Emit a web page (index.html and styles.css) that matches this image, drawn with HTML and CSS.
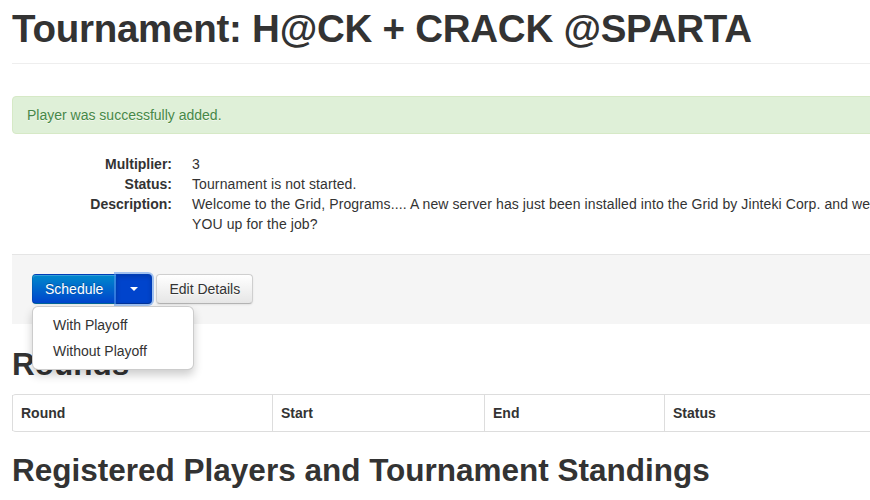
FILE: index.html
```html
<!DOCTYPE html>
<html>
<head>
<meta charset="utf-8">
<title>Tournament</title>
<link rel="stylesheet" href="styles.css">
</head>
<body>
<div class="page">
  <div class="page-header">
    <h1>Tournament: H@CK + CRACK @SPARTA</h1>
  </div>

  <div class="alert">Player was successfully added.</div>

  <dl class="details">
    <dt>Multiplier:</dt>
    <dd>3</dd>
    <dt>Status:</dt>
    <dd>Tournament is not started.</dd>
    <dt>Description:</dt>
    <dd>Welcome to the Grid, Programs.... A new server has just been installed into the Grid by Jinteki Corp. and we need it. Are<br>YOU up for the job?</dd>
  </dl>

  <div class="form-actions">
    <div class="btn-group open">
      <button class="btn btn-primary btn-first">Schedule</button><button class="btn btn-primary dropdown-toggle"><span class="caret"></span></button>
      <ul class="dropdown-menu">
        <li><a href="#">With Playoff</a></li>
        <li><a href="#">Without Playoff</a></li>
      </ul>
    </div>
    <button class="btn btn-default">Edit Details</button>
  </div>

  <h2>Rounds</h2>
  <table class="table">
    <thead>
      <tr>
        <th class="col-round">Round</th>
        <th class="col-start">Start</th>
        <th class="col-end">End</th>
        <th>Status</th>
      </tr>
    </thead>
  </table>

  <h2>Registered Players and Tournament Standings</h2>
</div>
</body>
</html>
```

FILE: styles.css
```css
html, body {
  margin: 0;
  padding: 0;
  overflow: hidden;
  background: #fff;
}

body {
  font-family: "Liberation Sans", Arial, Helvetica, sans-serif;
  font-size: 14px;
  line-height: 20px;
  color: #333;
}

.page {
  width: 940px;
  padding-left: 12px;
}

.page-header {
  padding-bottom: 14px;
  margin: 0 0 32px;
  border-bottom: 1px solid #eee;
}

h1 {
  margin: 9px 0 0;
  font-size: 38.5px;
  line-height: 40px;
  font-weight: bold;
  letter-spacing: -0.25px;
  color: #333;
}

h2 {
  margin: 10px 0;
  font-size: 31.5px;
  line-height: 40px;
  font-weight: bold;
  color: #333;
}

.alert {
  padding: 8px 35px 8px 14px;
  margin-bottom: 20px;
  background: #dff0d8;
  border: 1px solid #d6e9c6;
  border-radius: 4px;
  color: #468847;
  text-shadow: 0 1px 0 rgba(255, 255, 255, 0.5);
}

.details {
  display: grid;
  grid-template-columns: 160px 1fr;
  column-gap: 20px;
  margin: 0 0 20px;
}

.details dt {
  font-weight: bold;
  text-align: right;
  white-space: nowrap;
}

.details dd {
  margin: 0;
  letter-spacing: 0.1px;
}

.form-actions {
  display: flex;
  align-items: flex-start;
  gap: 4px;
  padding: 19px 20px 20px;
  margin: 20px 0;
  background: #f5f5f5;
  border-top: 1px solid #e5e5e5;
}

.btn-group {
  position: relative;
  display: flex;
}

.btn {
  display: inline-block;
  padding: 4px 12px;
  margin: 0;
  font-family: "Liberation Sans", Arial, Helvetica, sans-serif;
  font-size: 14px;
  line-height: 20px;
  border: 1px solid #ccc;
  border-radius: 4px;
  cursor: pointer;
}

.btn-default {
  padding: 4px 12px;
  color: #333;
  text-shadow: 0 1px 1px rgba(255, 255, 255, 0.75);
  background: linear-gradient(to bottom, #ffffff, #e6e6e6);
  border-color: #cfcfcf #cfcfcf #b3b3b3;
  box-shadow: inset 0 1px 0 rgba(255, 255, 255, 0.2), 0 1px 2px rgba(0, 0, 0, 0.08);
}

.btn-primary {
  color: #fff;
  text-shadow: 0 -1px 0 rgba(0, 0, 0, 0.25);
  background: linear-gradient(to bottom, #0088cc, #0044cc);
  border-color: rgba(0, 0, 0, 0.1) rgba(0, 0, 0, 0.1) rgba(0, 0, 0, 0.25);
  box-shadow: inset 0 1px 0 rgba(255, 255, 255, 0.2), 0 1px 2px rgba(0, 0, 0, 0.05);
}

.btn-first {
  padding: 4px 13px 4px 12px;
  border-radius: 4px 0 0 4px;
}

.dropdown-toggle {
  margin-left: -1px;
  padding: 4px 13px;
  border-radius: 0 4px 4px 0;
  background: #0044cc;
  box-shadow: inset 0 2px 4px rgba(0, 0, 0, 0.15), 0 0 0 2px rgba(90, 150, 235, 0.55);
  position: relative;
}

.caret {
  display: inline-block;
  width: 0;
  height: 0;
  vertical-align: middle;
  margin-top: -2px;
  border-top: 4px solid #fff;
  border-left: 4px solid transparent;
  border-right: 4px solid transparent;
}

.dropdown-menu {
  position: absolute;
  top: 100%;
  left: 0;
  z-index: 10;
  min-width: 160px;
  padding: 5px 0;
  margin: 2px 0 0;
  list-style: none;
  background: #fff;
  border: 1px solid rgba(0, 0, 0, 0.2);
  border-radius: 6px;
  box-shadow: 0 5px 10px rgba(0, 0, 0, 0.2);
}

.dropdown-menu a {
  display: block;
  padding: 3px 20px;
  line-height: 20px;
  color: #333;
  text-decoration: none;
  white-space: nowrap;
}

.table {
  width: 100%;
  margin-bottom: 18px;
  border-collapse: separate;
  border-spacing: 0;
  border: 1px solid #ddd;
  border-left: 0;
  border-radius: 4px;
}

.table th {
  padding: 8px;
  line-height: 20px;
  text-align: left;
  font-weight: bold;
  border-left: 1px solid #ddd;
}

.col-round { width: 243px; }
.col-start { width: 195px; }
.col-end { width: 163px; }
```
